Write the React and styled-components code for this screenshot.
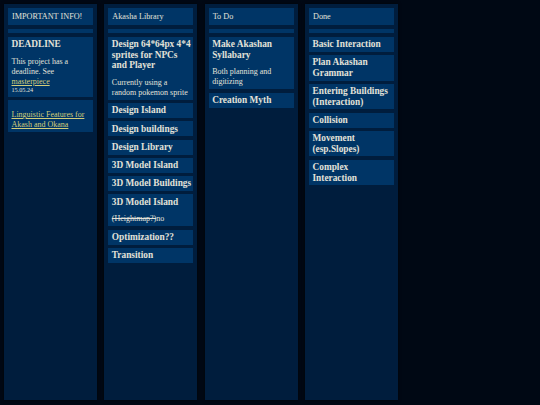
import React from 'react';
import styled, {createGlobalStyle} from 'styled-components';

const GlobalStyle = createGlobalStyle`
    html, body {
        margin: 0;
        padding: 0;
        background: #000814;
    }
    body {
        font-family: "Liberation Serif", "Times New Roman", serif;
        color: #e3e2d9;
    }
`;

const board = [
    {
        name: 'IMPORTANT INFO!',
        cards: [
            {
                title: 'DEADLINE',
                text: ['This project has a deadline. See '],
                link: 'masterpiece',
                date: '15.05.24',
            },
            {
                link: 'Linguistic Features for Akash and Okana',
            },
        ],
    },
    {
        name: 'Akasha Library',
        cards: [
            {
                title: 'Design 64*64px 4*4 sprites for NPCs and Player',
                text: ['Currently using a random pokemon sprite'],
            },
            {title: 'Design Island'},
            {title: 'Design buildings'},
            {title: 'Design Library'},
            {title: '3D Model Island'},
            {title: '3D Model Buildings'},
            {title: '3D Model Island', struck: '(Heightmap?)', after: 'no'},
            {title: 'Optimization??'},
            {title: 'Transition'},
        ],
    },
    {
        name: 'To Do',
        cards: [
            {
                title: 'Make Akashan Syllabary',
                text: ['Both planning and digitizing'],
            },
            {title: 'Creation Myth'},
        ],
    },
    {
        name: 'Done',
        cards: [
            {title: 'Basic Interaction'},
            {title: 'Plan Akashan Grammar'},
            {title: 'Entering Buildings (Interaction)'},
            {title: 'Collision'},
            {title: 'Movement (esp.Slopes)'},
            {title: 'Complex Interaction'},
        ],
    },
];

const Board = styled.main`
    display: flex;
    gap: 7.33px;
    padding: 4px 4px 5px;
    height: 405px;
    box-sizing: border-box;
`;

const Column = styled.section`
    width: 93px;
    flex: none;
    background: #001d3d;
    box-shadow: 0 0 3px rgba(0, 0, 0, 0.6);
    padding: 4px;
    box-sizing: border-box;
    display: flex;
    flex-direction: column;
    gap: 4px;
`;

const Header = styled.header`
    background: #003566;
    height: 17px;
    box-sizing: border-box;
    padding: 3px 4px;
    font-size: 8.2px;
    line-height: 11px;
    white-space: nowrap;
`;

const Bar = styled.div`
    background: #003566;
    height: 4px;
`;

const List = styled.div`
    display: flex;
    flex-direction: column;
    gap: 3.4px;
`;

const Card = styled.article`
    background: #003566;
    padding: 2.2px 1px 2.2px 3.5px;
`;

const Title = styled.h3`
    margin: 0;
    font-size: 9.33px;
    line-height: 10.5px;
    font-weight: bold;
`;

const Text = styled.p`
    margin: ${({$alone}) => ($alone ? '8px' : '7.3px')} 0 0;
    font-size: 8px;
    line-height: 9.8px;
`;

const Link = styled.a`
    color: #d2cd7a;
    text-decoration: underline;
`;

const Date = styled.div`
    font-size: 6.2px;
    line-height: 7px;
    margin-bottom: 1px;
`;

function TaskCard({card}) {
    const {title, text, link, date, struck, after} = card;
    return (
        <Card>
            {title && <Title>{title}</Title>}
            {(text || link) && (
                <Text $alone={!title}>
                    {text}
                    {link && <Link href='#'>{link}</Link>}
                </Text>
            )}
            {struck && (
                <Text>
                    <s>{struck}</s>{after}
                </Text>
            )}
            {date && <Date>{date}</Date>}
        </Card>
    );
}

export default function App() {
    return (
        <>
            <GlobalStyle />
            <Board>
                {board.map((column) => (
                    <Column key={column.name}>
                        <Header>{column.name}</Header>
                        <Bar />
                        <List>
                            {column.cards.map((card, i) => (
                                <TaskCard key={i} card={card} />
                            ))}
                        </List>
                    </Column>
                ))}
            </Board>
        </>
    );
}
